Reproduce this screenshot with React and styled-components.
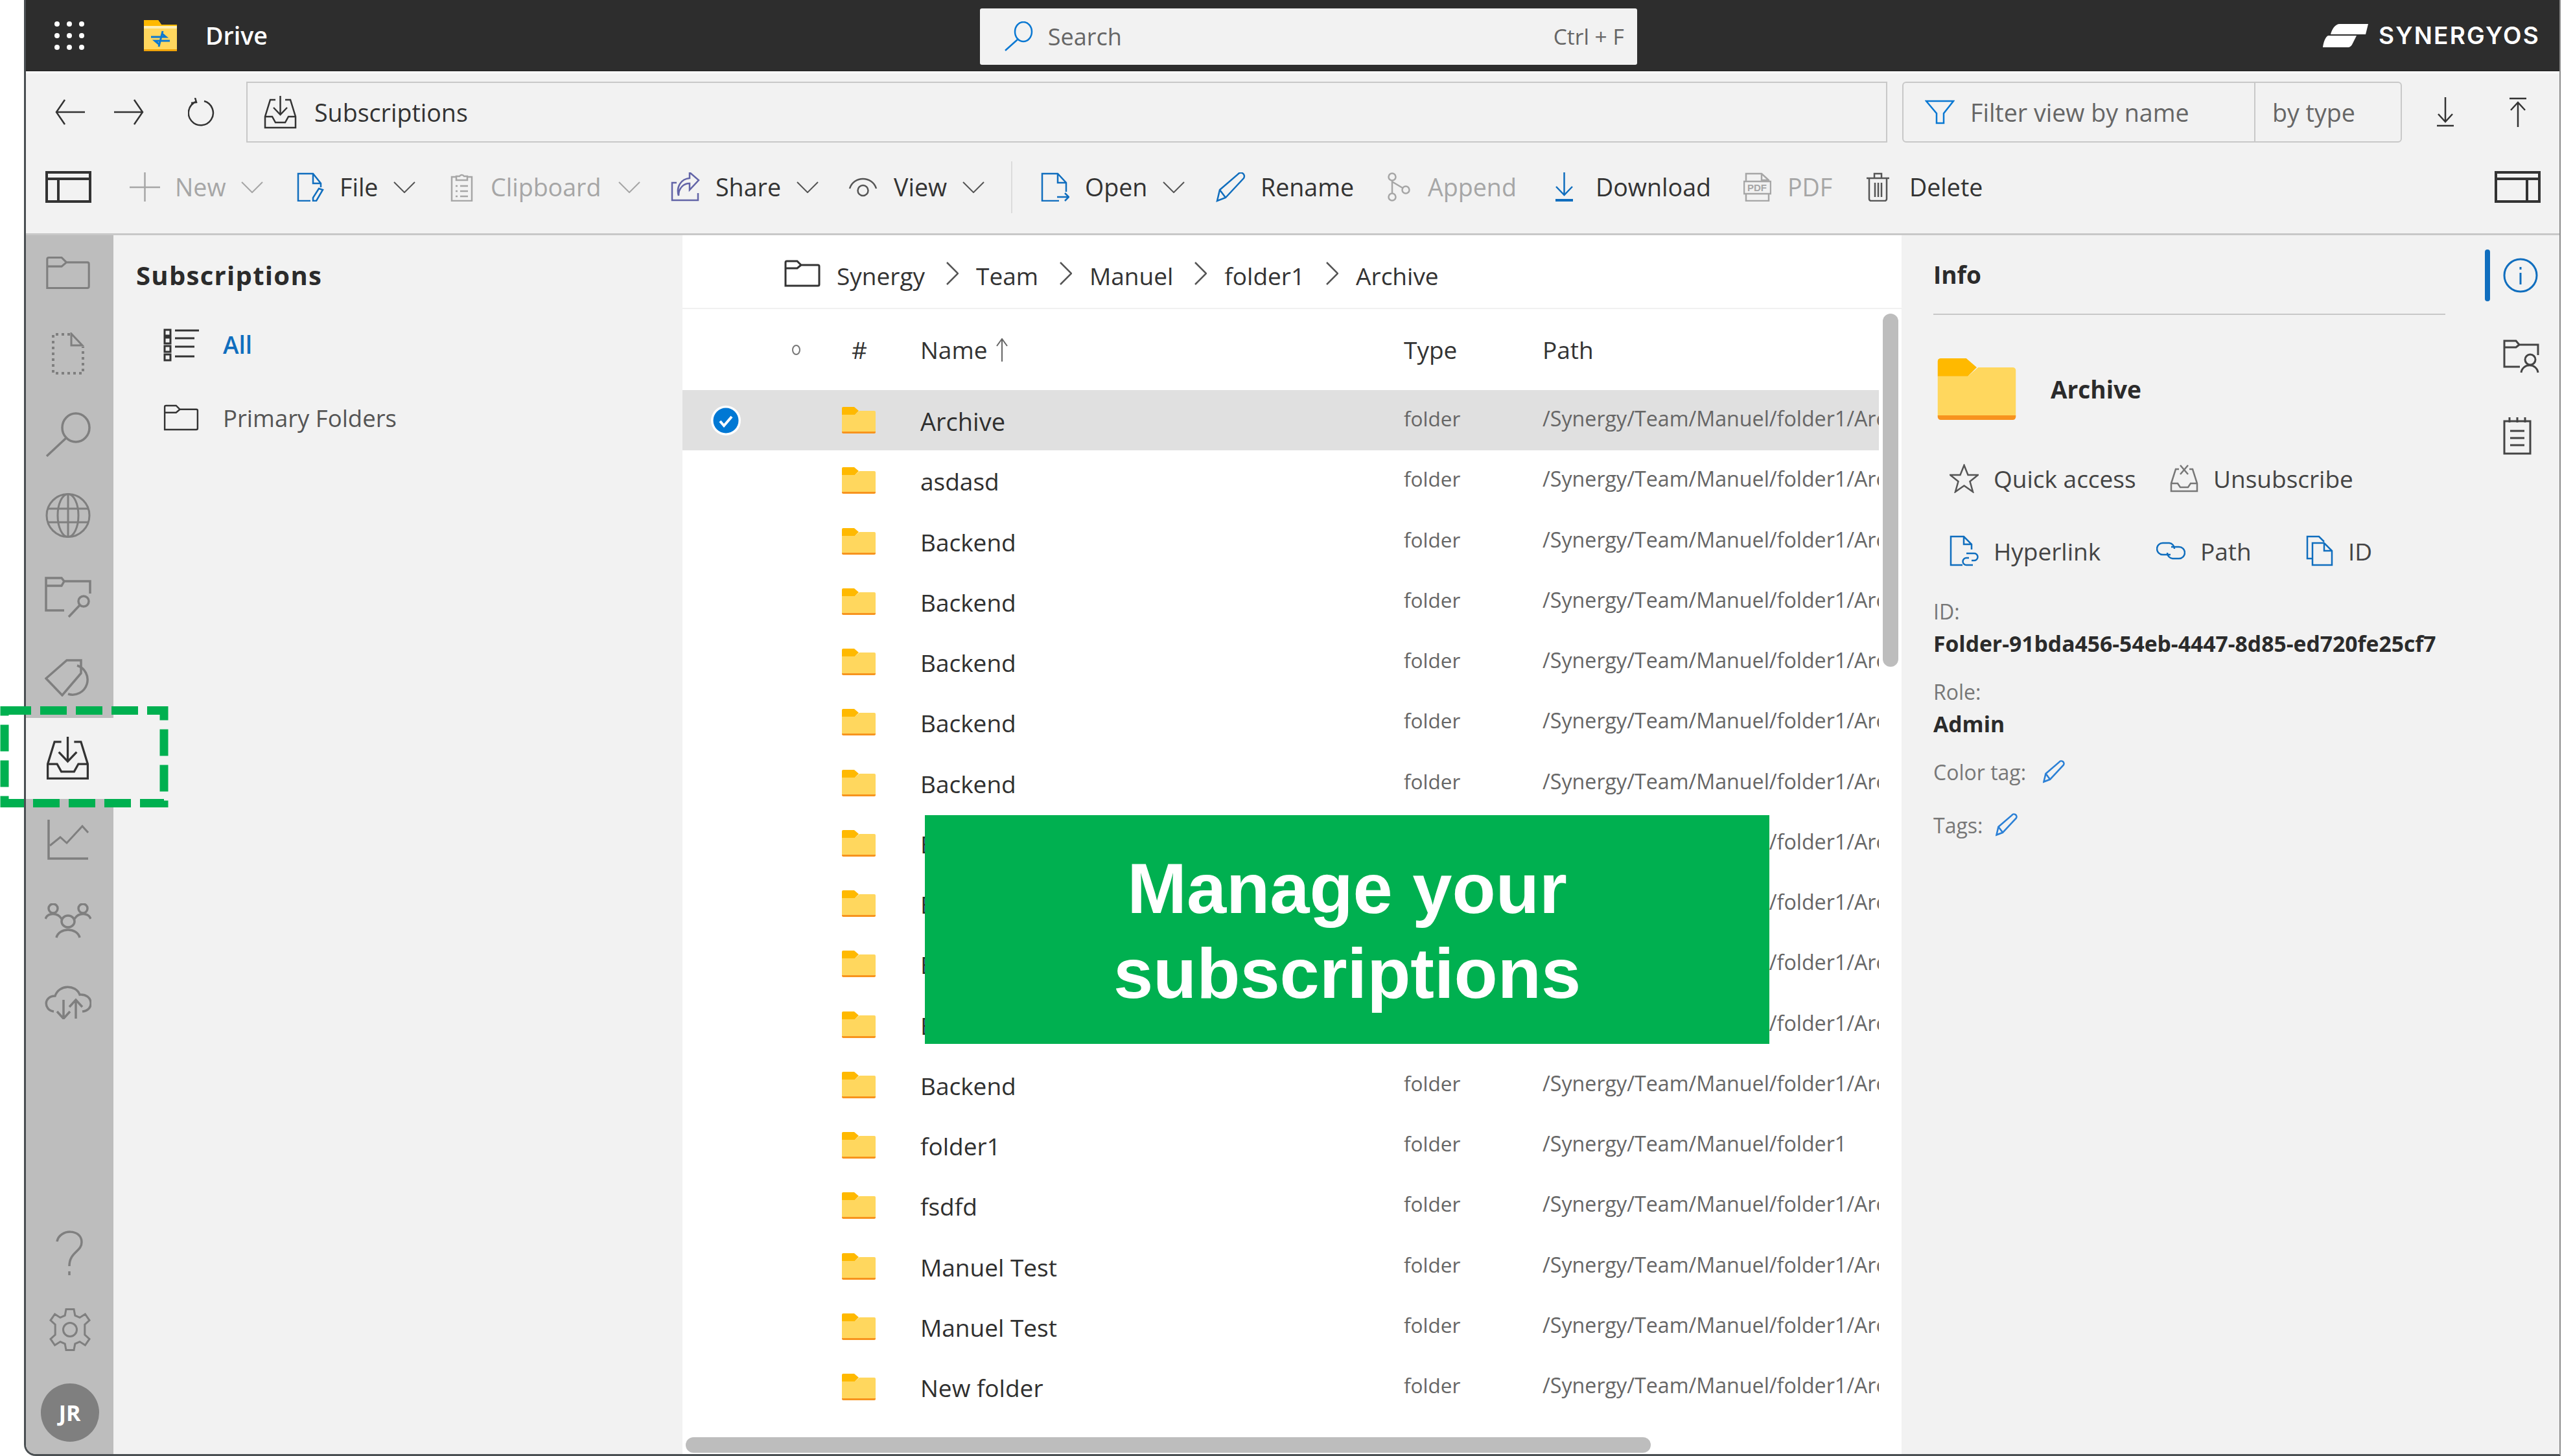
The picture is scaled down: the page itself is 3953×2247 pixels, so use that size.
import React from 'react';
import styled, { createGlobalStyle } from 'styled-components';

const GlobalStyle = createGlobalStyle`
    html, body {
        margin: 0;
        height: 100%;
        overflow: hidden;
        background: #fff;
    }
    * { box-sizing: border-box; }
`;

const BLUE = '#106ebe';
const INK = '#333';
const MUTED = '#a6a6a6';
const RAIL = '#7f7f7f';

const Page = styled.div`
    position: relative;
    width: 3953px;
    height: 2247px;
    overflow: hidden;
`;

const Frame = styled.div`
    width: 3914px;
    height: 2247px;
    margin-left: 37px;
    display: flex;
    flex-direction: column;
    border-left: 3px solid #4a4f52;
    border-right: 2px solid #8a8a8a;
    border-bottom: 3px solid #4a4f52;
    border-bottom-left-radius: 18px;
    overflow: hidden;
    background: #f2f2f2;
    font-family: "Open Sans", "Noto Sans", sans-serif;
    font-size: 37px;
    color: ${INK};
`;

const TopBar = styled.header`
    height: 110px;
    flex: none;
    display: flex;
    align-items: center;
    padding-left: 44px;
    background: #2d2d2d;
    border-bottom: 1px solid #222;
`;

const DriveTitle = styled.span`
    margin-left: 44px;
    color: #fff;
    font-size: 37.5px;
    font-weight: 600;
`;

const SearchBox = styled.div`
    width: 1014px;
    height: 87px;
    margin: 3px 0 0 1099px;
    padding: 0 20px 0 36px;
    display: flex;
    align-items: center;
    background: #f2f2f2;
    border-radius: 3px;
    color: #666;
`;

const SearchLabel = styled.span`
    margin-left: 23px;
    flex: 1;
    font-size: 36px;
`;

const Shortcut = styled.span`
    font-size: 33.5px;
`;

const Brand = styled.div`
    margin-left: auto;
    margin-right: 30px;
    display: flex;
    align-items: center;
    gap: 16px;
    color: #fff;
`;

const BrandName = styled.span`
    font-family: Inter, "Open Sans", sans-serif;
    font-size: 37px;
    font-weight: 600;
    letter-spacing: 2.2px;
`;

const Ribbon = styled.div`
    height: 253px;
    flex: none;
    border-top: 3px solid #fff;
    border-bottom: 3px solid #c8c8c8;
    font-size: 37.6px;
`;

const AddressRow = styled.div`
    height: 107px;
    padding: 13px 0 0 44px;
    display: flex;
    align-items: flex-start;
`;

const NavButton = styled.div`
    width: ${p => p.$w}px;
    height: 94px;
    flex: none;
    display: flex;
    align-items: center;
`;

const AddressBox = styled.div`
    width: 2532px;
    height: 94px;
    flex: none;
    display: flex;
    align-items: center;
    gap: 27px;
    padding-left: 25px;
    border: 2px solid #c8c8c8;
`;

const FilterBox = styled.div`
    width: 771px;
    height: 94px;
    margin-left: 23px;
    flex: none;
    display: flex;
    border: 2px solid #c8c8c8;
    border-radius: 6px;
    color: #666;
`;

const FilterName = styled.div`
    width: 543px;
    display: flex;
    align-items: center;
    gap: 24px;
    padding-left: 33px;
    border-right: 2px solid #c8c8c8;
`;

const FilterType = styled.div`
    display: flex;
    align-items: center;
    padding-left: 26px;
`;

const ActionRow = styled.div`
    height: 140px;
    padding: 0 29px 3px 30px;
    display: flex;
    align-items: center;
`;

const ToolItem = styled.div`
    width: ${p => p.$w}px;
    flex: none;
    display: flex;
    align-items: center;
    gap: ${p => p.$gap || 24}px;
    padding-right: ${p => p.$menu || 0}px;
    color: ${p => (p.$off ? MUTED : INK)};
`;

const ToolGap = styled.div`
    width: 59px;
    flex: none;
`;

const Chevron = styled.svg`
    margin-left: auto;
    flex: none;
    fill: none;
    stroke: ${p => (p.$off ? MUTED : '#555')};
    stroke-width: 2;
`;

const Separator = styled.div`
    width: 46px;
    height: 80px;
    flex: none;
    border-left: 2px solid #dcdcdc;
`;

const PushRight = styled.div`
    margin-left: auto;
    display: flex;
`;

const Body = styled.div`
    flex: 1;
    min-height: 0;
    display: flex;
`;

const Rail = styled.nav`
    width: 135px;
    flex: none;
    display: flex;
    flex-direction: column;
    justify-content: space-between;
    padding-bottom: 2px;
    background: #bdbdbd;
`;

const RailGroup = styled.div`
    margin-top: ${p => p.$top || 0}px;
`;

const RailItem = styled.div`
    height: ${p => p.$h || 125}px;
    padding-right: ${p => p.$inset || 0}px;
    display: flex;
    align-items: center;
    justify-content: center;
    background: ${p => (p.$active ? '#f2f2f2' : 'transparent')};
`;

const Avatar = styled.div`
    width: 90px;
    height: 90px;
    display: flex;
    align-items: center;
    justify-content: center;
    border-radius: 50%;
    background: ${RAIL};
    color: #fff;
    font-size: 34px;
    font-weight: 700;
`;

const SidePanel = styled.aside`
    width: 878px;
    flex: none;
    padding-left: 35px;
`;

const PanelTitle = styled.h2`
    margin: 0 0 -10px;
    height: 122px;
    display: flex;
    align-items: center;
    font-size: 40px;
    font-weight: 700;
    letter-spacing: 1.3px;
    color: #2b2b2b;
`;

const SideLink = styled.div`
    height: 113px;
    padding-left: 42px;
    display: flex;
    align-items: center;
    gap: 37px;
    font-size: ${p => (p.$on ? 37 : 36.5)}px;
    font-weight: ${p => (p.$on ? 600 : 400)};
    color: ${p => (p.$on ? BLUE : '#555')};
`;

const Main = styled.main`
    position: relative;
    width: 1881px;
    flex: none;
    background: #fff;
`;

const Crumbs = styled.div`
    height: 114px;
    padding: 6px 0 0 157px;
    display: flex;
    align-items: center;
    border-bottom: 2px solid #f0f0f0;
`;

const CrumbText = styled.span`
    margin: 6px 32.5px 0 ${p => (p.$first ? 25 : 27.5)}px;
`;

const Table = styled.div`
    width: 1846px;
    overflow: hidden;
`;

const HeadRow = styled.div`
    height: 125px;
    display: grid;
    grid-template-columns: 134px 83px 150px 746px 214px 1fr;
    align-items: center;
    font-weight: 500;
`;

const HeadDot = styled.span`
    justify-self: center;
    width: 13px;
    height: 16px;
    border: 2px solid #777;
    border-radius: 50%;
`;

const HeadHash = styled.span`
    padding-left: 44px;
`;

const HeadName = styled.span`
    display: flex;
    align-items: center;
    gap: 14px;
`;

const Row = styled.div`
    height: 93.25px;
    display: grid;
    grid-template-columns: 134px 112px 121px 746px 214px 1fr;
    align-items: center;
    background: ${p => (p.$selected ? '#e0e0e0' : 'transparent')};
`;

const CheckCell = styled.div`
    display: flex;
    justify-content: center;
`;

const NameCell = styled.span`
    margin-top: 2px;
    font-size: ${p => (p.$selected ? 38 : 37)}px;
    font-weight: ${p => (p.$selected ? 500 : 400)};
    color: #2f2f2f;
    white-space: nowrap;
`;

const SmallCell = styled.span`
    margin-top: -6px;
    font-size: ${p => (p.$path ? 32.2 : 31.5)}px;
    color: #666;
    white-space: nowrap;
    overflow: hidden;
`;

const VScroll = styled.div`
    position: absolute;
    left: 1852px;
    top: 121px;
    width: 24px;
    height: 545px;
    border-radius: 12px;
    background: #bdbdbd;
`;

const HScroll = styled.div`
    position: absolute;
    left: 5px;
    bottom: 2px;
    width: 1489px;
    height: 24px;
    border-radius: 12px;
    background: #bdbdbd;
`;

const InfoPanel = styled.aside`
    flex: 1;
    display: flex;
`;

const InfoBody = styled.div`
    width: 839px;
    flex: none;
    padding-left: 49px;
`;

const InfoTitle = styled.h2`
    margin: 0;
    height: 123px;
    display: flex;
    align-items: center;
    border-bottom: 2px solid #c8c8c8;
    font-size: 37px;
    font-weight: 700;
    color: #2b2b2b;
`;

const InfoHead = styled.div`
    margin: 67px 0 34px 5px;
    display: flex;
    align-items: center;
    gap: 52px;
    font-weight: 700;
    font-size: 37px;
    color: #2b2b2b;
`;

const InfoActions = styled.div`
    height: 112px;
    padding-left: 25px;
    display: flex;
    align-items: center;
`;

const InfoAction = styled.div`
    width: ${p => p.$w}px;
    flex: none;
    display: flex;
    align-items: center;
    gap: 23px;
    font-size: 37px;
    color: #444;
`;

const FieldLabel = styled.div`
    margin-top: ${p => p.$top}px;
    height: 50px;
    display: flex;
    align-items: center;
    gap: ${p => p.$gap || 20}px;
    font-size: 32px;
    color: #777;
`;

const FieldValue = styled.div`
    height: 50px;
    display: flex;
    align-items: center;
    font-size: 33.7px;
    font-weight: 700;
    color: #2b2b2b;
    white-space: nowrap;
`;

const InfoTabs = styled.div`
    margin-left: 61px;
`;

const InfoTab = styled.div`
    position: relative;
    height: 124px;
    padding-left: 28px;
    display: flex;
    align-items: center;

    ${p => p.$active && `
        &::before {
            content: '';
            position: absolute;
            left: 0;
            top: 22px;
            width: 8px;
            height: 80px;
            border-radius: 4px;
            background: ${BLUE};
        }
    `}
`;

const Banner = styled.div`
    position: absolute;
    left: 1427px;
    top: 1258px;
    width: 1303px;
    height: 353px;
    padding-top: 2px;
    display: flex;
    align-items: center;
    justify-content: center;
    background: #00b050;
    color: #fff;
    font-family: "Liberation Sans", Arial, sans-serif;
    font-size: 110px;
    font-weight: 700;
    line-height: 131px;
    text-align: center;
`;

const Callout = styled.svg`
    position: absolute;
    left: 0;
    top: 1090px;
    fill: none;
    stroke: #00b050;
    stroke-width: 13;
    stroke-dasharray: 41 14;
`;

const Line = styled.svg`
    flex: none;
    display: block;
    fill: none;
    stroke: ${p => p.$c || INK};
    stroke-width: ${p => p.$sw || 2.5};
`;

const Icon = ({ w, h, box, c, sw, children }) => (
    <Line width={w} height={h} viewBox={box || `0 0 ${w} ${h}`} $c={c} $sw={sw}>{children}</Line>
);

const Down = ({ off }) => (
    <Chevron $off={off} width="34" height="18" viewBox="0 0 34 18"><path d="M1 1 17 17 33 1" /></Chevron>
);

const InboxPaths = () => (
    <>
        <path d="M18 6H10L2 32V49H49V32L41 6H33" />
        <path d="M2 32H13L18 41H33L38 32H49" />
        <path d="M25.500 0V28M15 18 25.500 29 36 18" />
    </>
);

const FolderOutline = () => (
    <path d="M2 40V4a2 2 0 0 1 2-2H20L26 8H52a2 2 0 0 1 2 2V38a2 2 0 0 1-2 2ZM2 13H20L26 8" />
);

const PencilPaths = () => (
    <path d="M2 44 6 27 34 3a5 5 0 0 1 9 6L15 39ZM6 27 15 39" />
);

const YellowFolder = ({ w = 52, h = 41 }) => (
    <svg width={w} height={h} viewBox="0 0 52 41" style={{ display: 'block', flex: 'none' }}>
        <path d="M0 12H20L27 6H50a2 2 0 0 1 2 2V38a2 2 0 0 1-2 2H2a2 2 0 0 1-2-2Z" fill="#ffd75e" />
        <path d="M0 2A2 2 0 0 1 2 0H19L26 6 20 12H0Z" fill="#ffb900" />
        <path d="M0 38H52V39a2 2 0 0 1-2 2H2a2 2 0 0 1-2-2Z" fill="#f7931e" />
    </svg>
);

const DriveIcon = () => (
    <svg width="51" height="48" viewBox="0 0 51 48" style={{ display: 'block', flex: 'none', marginLeft: 92 }}>
        <path d="M0 0H22L27 7H51V48H0Z" fill="#ffd75e" />
        <path d="M0 0H22L27 7H51V9H0Z" fill="#ffb900" />
        <rect y="9" width="51" height="4" fill="#fdeeb5" />
        <rect y="45" width="51" height="3" fill="#f0a30a" />
        <path d="M11 26H34L28 21M40 32H17L23 37M29 17 23 41" fill="none" stroke="#0a78d2" strokeWidth="3" />
    </svg>
);

const AppDots = () => (
    <svg width="46" height="44" viewBox="0 0 46 44" style={{ display: 'block', flex: 'none' }}>
        {[4, 22, 40].map(y => [4, 23, 42].map(x => <circle key={`${x}-${y}`} cx={x} cy={y} r="4" fill="#fff" />))}
    </svg>
);

const BrandMark = () => (
    <svg width="70" height="36" viewBox="0 0 70 36" style={{ display: 'block' }}>
        <path d="M26 0H70L66 16H12C14 8 19 0 26 0ZM8 18H52L46 30C44 34 42 36 38 36H0C1 28 4 20 8 18Z" fill="#fff" />
    </svg>
);

const LayoutIcon = ({ split }) => (
    <Icon w={71} h={49} c="#333" sw={4}>
        <path d={`M2 2H69V47H2ZM2 12H69M${split} 12V47`} />
    </Icon>
);

const ToolIcons = {
    plus: <Icon w={47} h={45} c={MUTED}><path d="M23.500 0V45M0 23H47" /></Icon>,
    file: (
        <Icon w={42} h={45} c={BLUE}>
            <path d="M21 44H2V2H25L37 17V23M25 2V17H37" />
            <path d="M34 25 40 27 30 44H25V39Z" />
        </Icon>
    ),
    clipboard: (
        <Icon w={35} h={45} c={MUTED}>
            <path d="M8 7H2V44H33V7H27M9 12V6H14a4 4 0 0 1 7 0H26V12ZM8 21H11M15 21H27M8 29H11M15 29H27M8 37H11M15 37H27" />
        </Icon>
    ),
    share: (
        <Icon w={45} h={45} c="#6264a7">
            <path d="M9 16H2V43H42V32" />
            <path d="M12 36C12 24 20 17 29 17V27L43 12 29 0V9C16 10 8 22 12 36Z" />
        </Icon>
    ),
    view: (
        <Icon w={47} h={42} c="#555">
            <path d="M3 23C9 3 38 3 44 23" />
            <circle cx="23.500" cy="26" r="8" />
        </Icon>
    ),
    open: (
        <Icon w={44} h={45} c={BLUE}>
            <path d="M28 44H2V2H26L39 16V30M26 2V16H39" />
            <path d="M25 38H43M37 32 43 38 37 44" />
        </Icon>
    ),
    rename: <Icon w={46} h={46} c={BLUE}><PencilPaths /></Icon>,
    append: (
        <Icon w={37} h={45} c={MUTED}>
            <circle cx="8" cy="7" r="5.500" />
            <circle cx="8" cy="38" r="5.500" />
            <circle cx="29" cy="27" r="5.500" />
            <path d="M8 13V32M9 15 24 24" />
        </Icon>
    ),
    download: (
        <Icon w={27} h={45} c={BLUE}>
            <path d="M13.500 0V34M1 22 13.500 35 26 22" />
            <path d="M0 43H27" strokeWidth="4" />
        </Icon>
    ),
    pdf: (
        <Icon w={43} h={45} c={MUTED}>
            <path d="M4 14V2H28L39 12V14M4 33V44H39V33M1 14H42V33H1ZM28 2V12H39" />
            <text x="6" y="29" fontSize="15" fontWeight="700" fill={MUTED} stroke="none" fontFamily="Liberation Sans">PDF</text>
        </Icon>
    ),
    trash: (
        <Icon w={37} h={45} c="#555">
            <path d="M1 9H36M5 9V41a3 3 0 0 0 3 3H29a3 3 0 0 0 3-3V9M13 9V2H24V9M14 16V38M19 16V38M24 16V38" />
        </Icon>
    ),
};

const RailIcons = {
    folder: (
        <Icon w={72} h={52} box="0 0 56 42" c={RAIL} sw={2.500}><FolderOutline /></Icon>
    ),
    doc: (
        <Icon w={50} h={65} c={RAIL} sw={4}>
            <path d="M28 3H2V63H48V22" strokeDasharray="4 5" />
            <path d="M30 2V20H47Z" strokeWidth="3" />
        </Icon>
    ),
    search: (
        <Icon w={70} h={70} c={RAIL} sw={3.500}>
            <ellipse cx="47" cy="24" rx="21" ry="22" />
            <path d="M32 40 2 68" />
        </Icon>
    ),
    globe: (
        <Icon w={70} h={71} c={RAIL} sw={3}>
            <circle cx="35" cy="35.500" r="33" />
            <ellipse cx="35" cy="35.500" rx="16" ry="33" />
            <path d="M35 2V69M3 25H67M3 46H67" />
        </Icon>
    ),
    folderSearch: (
        <Icon w={72} h={66} c={RAIL} sw={3.500}>
            <path d="M30 54H2V4H26L30 9H70V28M2 16H26L30 9" />
            <circle cx="60" cy="40" r="8" />
            <path d="M54 46 37 64" />
        </Icon>
    ),
    tag: (
        <Icon w={71} h={58} c={RAIL} sw={3.500}>
            <path d="M2 30 34 2H56V22L27 56Z" />
            <path d="M50 10A23 23 0 0 1 36 54" />
        </Icon>
    ),
    inbox: (
        <Icon w={67} h={67} box="0 0 51 51" c="#333" sw={2.500}><InboxPaths /></Icon>
    ),
    chart: (
        <Icon w={64} h={62} c={RAIL} sw={3}>
            <path d="M2 0V60H63" strokeWidth="3.500" />
            <path d="M4 40 20 27 30 36 54 10 63 20" />
        </Icon>
    ),
    people: (
        <Icon w={72} h={54} c={RAIL} sw={3.500}>
            <circle cx="13" cy="8" r="7" />
            <circle cx="59" cy="8" r="7" />
            <ellipse cx="36" cy="28" rx="10" ry="9" />
            <path d="M1 24C5 14 20 14 26 24M46 24C52 14 67 14 71 24M18 53C22 37 50 37 54 53" />
        </Icon>
    ),
    cloud: (
        <Icon w={72} h={54} c={RAIL} sw={3.500}>
            <path d="M14 42C-2 40-2 18 16 18 22 0 48 0 54 16 74 14 78 40 58 42" />
            <path d="M29 24V52M19 42 29 53 39 42M48 53V24M38 35 48 24 58 35" />
        </Icon>
    ),
    help: (
        <Icon w={42} h={72} c={RAIL} sw={3.500}>
            <path d="M2 18C6-2 40-2 40 19 40 34 21 34 21 56" />
            <path d="M21 64V70" />
        </Icon>
    ),
    gear: (
        <Icon w={72} h={72} box="0 0 24 24" c={RAIL} sw={1}>
            <circle cx="12" cy="12" r="3.500" />
            <path d="M10 1.500H14L14.600 4.700 17 5.800 19.800 4 22 7.200 19.600 9.400V14.600L22 16.800 19.800 20 17 18.200 14.600 19.300 14 22.500H10L9.400 19.300 7 18.200 4.200 20 2 16.800 4.400 14.600V9.400L2 7.200 4.200 4 7 5.800 9.400 4.700Z" />
        </Icon>
    ),
};

const toolbar = [
    { label: 'New', icon: 'plus', w: 258, menu: 56, off: true, gap: 23 },
    { label: 'File', icon: 'file', w: 237, menu: 57 },
    { label: 'Clipboard', icon: 'clipboard', w: 340, menu: 54, off: true, gap: 27 },
    { label: 'Share', icon: 'share', w: 273, menu: 60 },
    { label: 'View', icon: 'view', w: 252, menu: 47 },
    { sep: true },
    { label: 'Open', icon: 'open', w: 270, menu: 55 },
    { label: 'Rename', icon: 'rename', w: 264, gap: 23 },
    { label: 'Append', icon: 'append', w: 260, off: true, gap: 26 },
    { label: 'Download', icon: 'download', w: 290, gap: 35 },
    { label: 'PDF', icon: 'pdf', w: 189, off: true, gap: 25 },
    { label: 'Delete', icon: 'trash', w: 180, gap: 30 },
];

const railTop = ['folder', 'doc', 'search', 'globe', 'folderSearch', 'tag', 'inbox', 'chart', 'people', 'cloud'];

const rows = [
    'Archive', 'asdasd', 'Backend', 'Backend', 'Backend', 'Backend', 'Backend', 'Backend', 'Backend',
    'Backend', 'Backend', 'Backend', 'folder1', 'fsdfd', 'Manuel Test', 'Manuel Test', 'New folder',
];

const crumbs = ['Synergy', 'Team', 'Manuel', 'folder1', 'Archive'];

const App = () => (
    <Page>
        <GlobalStyle />
        <Frame>
            <TopBar>
                <AppDots />
                <DriveIcon />
                <DriveTitle>Drive</DriveTitle>
                <SearchBox>
                    <Icon w={46} h={46} c="#0a78d2">
                        <ellipse cx="31" cy="16" rx="13" ry="15" />
                        <path d="M22 28 3 45" />
                    </Icon>
                    <SearchLabel>Search</SearchLabel>
                    <Shortcut>Ctrl + F</Shortcut>
                </SearchBox>
                <Brand>
                    <BrandMark />
                    <BrandName>SYNERGYOS</BrandName>
                </Brand>
            </TopBar>

            <Ribbon>
                <AddressRow>
                    <NavButton $w={92}>
                        <Icon w={47} h={40}><path d="M47 20H3M16 1 3 20 16 39" /></Icon>
                    </NavButton>
                    <NavButton $w={114}>
                        <Icon w={47} h={40}><path d="M0 20H44M31 1 44 20 31 39" /></Icon>
                    </NavButton>
                    <NavButton $w={90}>
                        <Icon w={44} h={44}>
                            <path d="M25 5A19 19 0 1 1 12 6M11 0 13 7 5 8" />
                        </Icon>
                    </NavButton>
                    <AddressBox>
                        <Icon w={51} h={51}><InboxPaths /></Icon>
                        Subscriptions
                    </AddressBox>
                    <FilterBox>
                        <FilterName>
                            <Icon w={46} h={38} c="#0a78d2"><path d="M2 2H44L29 21V36H18V21Z" /></Icon>
                            Filter view by name
                        </FilterName>
                        <FilterType>by type</FilterType>
                    </FilterBox>
                    <NavButton $w={54} />
                    <NavButton $w={112}>
                        <Icon w={26} h={46}><path d="M13 0V36M2 26 13 38 24 26M0 44H26" /></Icon>
                    </NavButton>
                    <NavButton $w={30}>
                        <Icon w={26} h={46}><path d="M13 46V10M2 20 13 8 24 20M0 2H26" /></Icon>
                    </NavButton>
                </AddressRow>
                <ActionRow>
                    <LayoutIcon split={20} />
                    <ToolGap />
                    {toolbar.map((t, i) => (t.sep ? <Separator key={i} /> : (
                        <ToolItem key={t.label} $w={t.w} $menu={t.menu} $off={t.off} $gap={t.gap}>
                            {ToolIcons[t.icon]}
                            {t.label}
                            {t.menu && <Down off={t.off} />}
                        </ToolItem>
                    )))}
                    <PushRight><LayoutIcon split={50} /></PushRight>
                </ActionRow>
            </Ribbon>

            <Body>
                <Rail>
                    <RailGroup $top={-5}>
                        {railTop.map(name => (
                            <RailItem key={name} $active={name === 'inbox'} $inset={6}>{RailIcons[name]}</RailItem>
                        ))}
                    </RailGroup>
                    <RailGroup>
                        <RailItem $h={106} $inset={2}>{RailIcons.help}</RailItem>
                        <RailItem $h={130}>{RailIcons.gear}</RailItem>
                        <RailItem $h={125}><Avatar>JR</Avatar></RailItem>
                    </RailGroup>
                </Rail>

                <SidePanel>
                    <PanelTitle>Subscriptions</PanelTitle>
                    <SideLink $on>
                        <Icon w={55} h={52} c="#333" sw={3}>
                            <path d="M2 3H11V12H2ZM2 15H11V24H2ZM2 28H11V37H2ZM2 41H11V50H2ZM18 4H55M18 16H48M18 29H48M18 44H48" />
                        </Icon>
                        All
                    </SideLink>
                    <SideLink>
                        <Icon w={55} h={41} box="0 0 56 42"><FolderOutline /></Icon>
                        Primary Folders
                    </SideLink>
                </SidePanel>

                <Main>
                    <Crumbs>
                        <Icon w={56} h={42} c="#333" sw={3}><FolderOutline /></Icon>
                        {crumbs.map((name, i) => (
                            <React.Fragment key={name}>
                                <CrumbText $first={i === 0}>{name}</CrumbText>
                                {i < crumbs.length - 1 && (
                                    <Icon w={19} h={36} c="#555"><path d="M1 1 18 18 1 35" /></Icon>
                                )}
                            </React.Fragment>
                        ))}
                    </Crumbs>
                    <Table>
                        <HeadRow>
                            <span />
                            <HeadDot />
                            <HeadHash>#</HeadHash>
                            <HeadName>
                                Name
                                <Icon w={18} h={36} c="#666" sw={2}><path d="M9 36V2M1 12 9 1 17 12" /></Icon>
                            </HeadName>
                            <span>Type</span>
                            <span>Path</span>
                        </HeadRow>
                        {rows.map((name, i) => (
                            <Row key={i} $selected={i === 0}>
                                <CheckCell>
                                    {i === 0 && (
                                        <svg width="46" height="46" viewBox="0 0 46 46" style={{ display: 'block' }}>
                                            <circle cx="23" cy="23" r="23" fill="#fff" />
                                            <circle cx="23" cy="23" r="19.500" fill="#0078d4" />
                                            <path d="M14 24 20 31 32 17" fill="none" stroke="#fff" strokeWidth="4" />
                                        </svg>
                                    )}
                                </CheckCell>
                                <span />
                                <YellowFolder />
                                <NameCell $selected={i === 0}>{name}</NameCell>
                                <SmallCell>folder</SmallCell>
                                <SmallCell $path>{name === 'folder1' ? '/Synergy/Team/Manuel/folder1' : '/Synergy/Team/Manuel/folder1/Archive'}</SmallCell>
                            </Row>
                        ))}
                    </Table>
                    <VScroll />
                    <HScroll />
                </Main>

                <InfoPanel>
                    <InfoBody>
                        <InfoTitle>Info</InfoTitle>
                        <InfoHead>
                            <YellowFolder w={124} h={95} />
                            Archive
                        </InfoHead>
                        <InfoActions>
                            <InfoAction $w={340}>
                                <Icon w={45} h={45} c="#555">
                                    <path d="M22.500 2 28.500 17H44L31.500 27 36 43 22.500 33.500 9 43 13.500 27 1 17H16.500Z" />
                                </Icon>
                                Quick access
                            </InfoAction>
                            <InfoAction $w={320}>
                                <Icon w={44} h={44} c="#777">
                                    <path d="M14 8H9L2 30V42H42V30L35 8H30M2 30H12L16 36H28L32 30H42M16 2 28 16M28 2 16 16" />
                                </Icon>
                                Unsubscribe
                            </InfoAction>
                        </InfoActions>
                        <InfoActions>
                            <InfoAction $w={319}>
                                <Icon w={45} h={48} c={BLUE}>
                                    <path d="M20 46H2V2H22L34 14V22M22 2V14H34" />
                                    <path d="M26 28H38a5 5 0 0 1 0 11H34M36 46H26a5 5 0 0 1 0-11H30" />
                                </Icon>
                                Hyperlink
                            </InfoAction>
                            <InfoAction $w={231}>
                                <Icon w={45} h={30} c={BLUE}>
                                    <path d="M22 21H10a9 9 0 0 1 0-18H20a9 9 0 0 1 8 9" />
                                    <path d="M23 9H35a9 9 0 0 1 0 18H25a9 9 0 0 1-8-9" />
                                </Icon>
                                Path
                            </InfoAction>
                            <InfoAction $w={120}>
                                <Icon w={42} h={48} c={BLUE}>
                                    <path d="M10 36H2V2H20L28 10M10 46V12H28L40 24V46ZM28 12V24H40" />
                                </Icon>
                                ID
                            </InfoAction>
                        </InfoActions>
                        <FieldLabel $top={12}>ID:</FieldLabel>
                        <FieldValue>Folder-91bda456-54eb-4447-8d85-ed720fe25cf7</FieldValue>
                        <FieldLabel $top={24}>Role:</FieldLabel>
                        <FieldValue>Admin</FieldValue>
                        <FieldLabel $top={24} $gap={26}>
                            Color tag:
                            <Icon w={34} h={36} box="0 0 46 46" c="#2b80d6" sw={3.500}><PencilPaths /></Icon>
                        </FieldLabel>
                        <FieldLabel $top={32}>
                            Tags:
                            <Icon w={34} h={36} box="0 0 46 46" c="#2b80d6" sw={3.500}><PencilPaths /></Icon>
                        </FieldLabel>
                    </InfoBody>
                    <InfoTabs>
                        <InfoTab $active>
                            <Icon w={54} h={54} c={BLUE} sw={3}>
                                <circle cx="27" cy="27" r="25" />
                                <path d="M27 23V41M27 14V18" />
                            </Icon>
                        </InfoTab>
                        <InfoTab>
                            <Icon w={56} h={54} c="#444" sw={3}>
                                <path d="M26 44H2V4H20L25 10H54V26M2 14H20L25 10" />
                                <circle cx="42" cy="33" r="8" />
                                <path d="M28 53C30 38 52 38 54 53" />
                            </Icon>
                        </InfoTab>
                        <InfoTab>
                            <Icon w={44} h={58} c="#444" sw={3}>
                                <path d="M2 6H42V56H2ZM10 0V8M22 0V8M34 0V8M11 21H33M11 32H33M11 43H33" />
                            </Icon>
                        </InfoTab>
                    </InfoTabs>
                </InfoPanel>
            </Body>
        </Frame>
        <Callout width="260" height="156" viewBox="0 0 260 156">
            <rect x="7" y="6.500" width="246" height="143" />
        </Callout>
        <Banner>Manage your<br />subscriptions</Banner>
    </Page>
);

export default App;
